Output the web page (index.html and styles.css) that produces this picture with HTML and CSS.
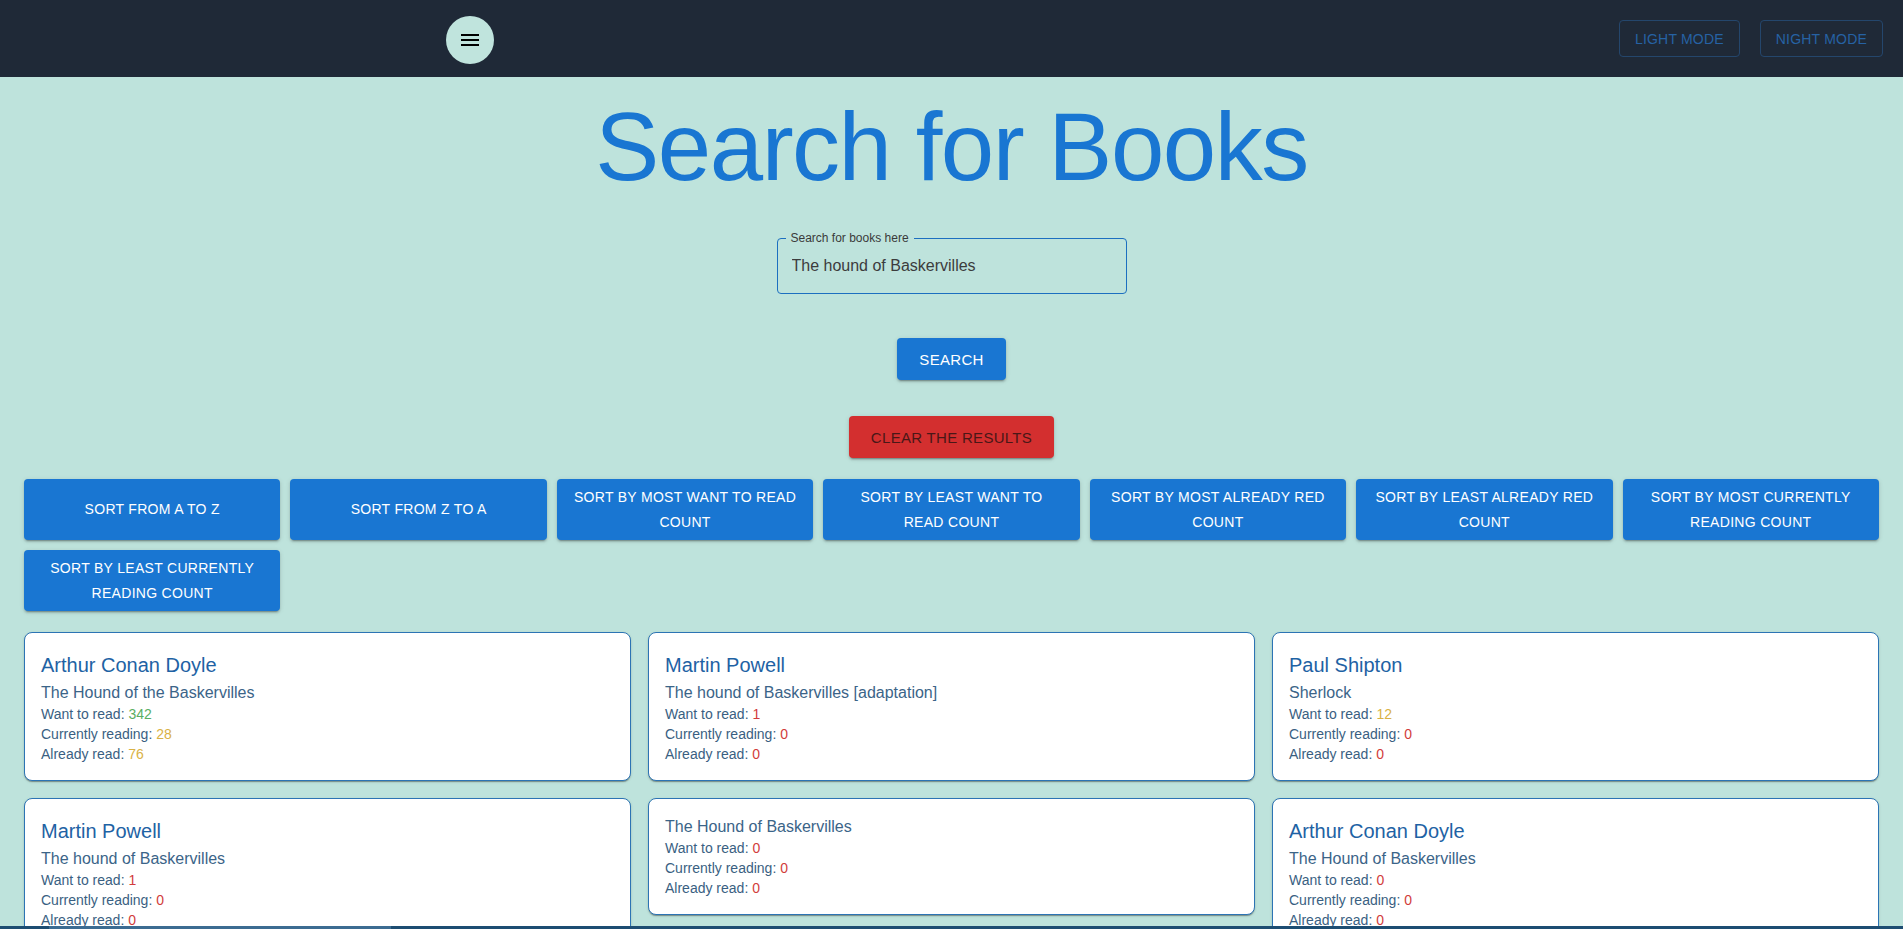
FILE: index.html
```html
<!DOCTYPE html>
<html lang="en">
<head>
<meta charset="utf-8">
<title>Search for Books</title>
<link rel="stylesheet" href="styles.css">
</head>
<body>
<header class="topbar">
  <button class="menu-btn" aria-label="menu">
    <svg viewBox="0 0 24 24" width="24" height="24"><path d="M3 18h18v-2H3v2zm0-5h18v-2H3v2zm0-7v2h18V6H3z" fill="#000"/></svg>
  </button>
  <div class="mode-group">
    <button class="mode-btn">Light mode</button>
    <button class="mode-btn">Night mode</button>
  </div>
</header>

<main class="page">
  <h1 class="title">Search for Books</h1>

  <div class="field">
    <span class="field-label">Search for books here</span>
    <div class="field-box">
      <input class="field-input" type="text" value="The hound of Baskervilles">
    </div>
  </div>

  <button class="btn btn-large btn-primary search-btn">Search</button>
  <button class="btn btn-large btn-danger clear-btn">Clear the results</button>

  <div class="sort-bar">
    <button class="btn btn-primary sort-btn">Sort from A to Z</button>
    <button class="btn btn-primary sort-btn">Sort from Z to A</button>
    <button class="btn btn-primary sort-btn">Sort by most want to read count</button>
    <button class="btn btn-primary sort-btn">Sort by least want to read count</button>
    <button class="btn btn-primary sort-btn">Sort by most already red count</button>
    <button class="btn btn-primary sort-btn">Sort by least already red count</button>
    <button class="btn btn-primary sort-btn">Sort by most currently reading count</button>
    <button class="btn btn-primary sort-btn">Sort by least currently reading count</button>
  </div>

  <section class="results">
    <article class="card">
      <div class="card-author">Arthur Conan Doyle</div>
      <div class="card-title">The Hound of the Baskervilles</div>
      <div class="card-stat">Want to read: <span class="num good">342</span></div>
      <div class="card-stat">Currently reading: <span class="num mid">28</span></div>
      <div class="card-stat">Already read: <span class="num mid">76</span></div>
    </article>
    <article class="card">
      <div class="card-author">Martin Powell</div>
      <div class="card-title">The hound of Baskervilles [adaptation]</div>
      <div class="card-stat">Want to read: <span class="num bad">1</span></div>
      <div class="card-stat">Currently reading: <span class="num bad">0</span></div>
      <div class="card-stat">Already read: <span class="num bad">0</span></div>
    </article>
    <article class="card">
      <div class="card-author">Paul Shipton</div>
      <div class="card-title">Sherlock</div>
      <div class="card-stat">Want to read: <span class="num mid">12</span></div>
      <div class="card-stat">Currently reading: <span class="num bad">0</span></div>
      <div class="card-stat">Already read: <span class="num bad">0</span></div>
    </article>
    <article class="card">
      <div class="card-author">Martin Powell</div>
      <div class="card-title">The hound of Baskervilles</div>
      <div class="card-stat">Want to read: <span class="num bad">1</span></div>
      <div class="card-stat">Currently reading: <span class="num bad">0</span></div>
      <div class="card-stat">Already read: <span class="num bad">0</span></div>
    </article>
    <article class="card">
      <div class="card-title">The Hound of Baskervilles</div>
      <div class="card-stat">Want to read: <span class="num bad">0</span></div>
      <div class="card-stat">Currently reading: <span class="num bad">0</span></div>
      <div class="card-stat">Already read: <span class="num bad">0</span></div>
    </article>
    <article class="card">
      <div class="card-author">Arthur Conan Doyle</div>
      <div class="card-title">The Hound of Baskervilles</div>
      <div class="card-stat">Want to read: <span class="num bad">0</span></div>
      <div class="card-stat">Currently reading: <span class="num bad">0</span></div>
      <div class="card-stat">Already read: <span class="num bad">0</span></div>
    </article>
  </section>
</main>

<div class="bottom-strip"><span class="bottom-thumb"></span></div>
</body>
</html>
```

FILE: styles.css
```css
* {
  box-sizing: border-box;
}

html, body {
  margin: 0;
  padding: 0;
}

body {
  background: #bee3dc;
  font-family: "Liberation Sans", Arial, sans-serif;
  color: #333;
}

button {
  font-family: inherit;
  cursor: pointer;
}

/* ---------- top bar ---------- */
.topbar {
  height: 77px;
  background: #1f2937;
  display: flex;
  align-items: center;
  justify-content: space-between;
  padding: 0 20px 0 446px;
}

.menu-btn {
  width: 48px;
  height: 48px;
  border-radius: 50%;
  border: none;
  background: #c0e4dd;
  display: flex;
  align-items: center;
  justify-content: center;
  padding: 0;
  margin-top: 2px;
}

.mode-group {
  display: flex;
  gap: 20px;
}

.mode-btn {
  height: 37px;
  padding: 0 15px;
  background: transparent;
  border: 1px solid #24466c;
  border-radius: 4px;
  color: #2662a4;
  font-size: 14px;
  letter-spacing: 0.2px;
  text-transform: uppercase;
}

/* ---------- page ---------- */
.page {
  display: flex;
  flex-direction: column;
  align-items: center;
}

.title {
  margin: 14px 0 0;
  font-size: 96px;
  line-height: 112px;
  font-weight: 400;
  letter-spacing: -1.5px;
  color: #1976d2;
}

.field {
  position: relative;
  margin-top: 35px;
  width: 350px;
}

.field-box {
  height: 56px;
  border: 1px solid #1c6fc0;
  border-radius: 4px;
  display: flex;
  align-items: center;
  padding: 0 14px;
}

.field-input {
  border: none;
  outline: none;
  background: transparent;
  font-family: inherit;
  font-size: 16px;
  color: #3c3c3c;
  width: 100%;
  padding: 0;
}

.field-label {
  position: absolute;
  top: -7px;
  left: 9px;
  padding: 0 5px;
  background: #bee3dc;
  font-size: 12px;
  line-height: 14px;
  color: #3a3a3a;
}

/* ---------- buttons ---------- */
.btn {
  border: none;
  border-radius: 4px;
  text-transform: uppercase;
  box-shadow: 0 3px 1px -2px rgba(0,0,0,.2), 0 2px 2px 0 rgba(0,0,0,.14), 0 1px 5px 0 rgba(0,0,0,.12);
}

.btn-large {
  height: 42px;
  padding: 0 22px;
  font-size: 15px;
  letter-spacing: 0.3px;
  white-space: nowrap;
}

.btn-primary {
  background: #1976d2;
  color: #fff;
}

.btn-danger {
  background: #d32f2f;
  color: #4a1717;
}

.search-btn {
  margin-top: 44px;
}

.clear-btn {
  margin-top: 36px;
}

.sort-bar {
  align-self: stretch;
  margin: 21px 24px 0;
  display: flex;
  flex-wrap: wrap;
  gap: 10px;
}

.sort-btn {
  width: calc((100% - 60px) / 7);
  min-height: 61px;
  padding: 6px 16px;
  font-size: 14px;
  line-height: 24.5px;
  letter-spacing: 0.3px;
}

/* ---------- results ---------- */
.results {
  align-self: stretch;
  margin: 21px 24px 0;
  display: grid;
  grid-template-columns: repeat(3, 1fr);
  column-gap: 17px;
  row-gap: 17px;
  align-items: start;
  padding-bottom: 20px;
}

.card {
  background: #fff;
  border: 1px solid #2c74b4;
  border-radius: 8px;
  padding: 16px;
  box-shadow: 0 2px 1px -1px rgba(0,0,0,.2), 0 1px 1px 0 rgba(0,0,0,.14), 0 1px 3px 0 rgba(0,0,0,.12);
}

.card-author {
  font-size: 20px;
  line-height: 32px;
  color: #1e62a4;
}

.card-title {
  font-size: 16px;
  line-height: 23px;
  color: #3b6488;
}

.card-stat {
  font-size: 14px;
  line-height: 20px;
  color: #3a5f82;
}

.num.good { color: #5aae62; }
.num.mid  { color: #d9b245; }
.num.bad  { color: #d23c3c; }

/* ---------- bottom strip ---------- */
.bottom-strip {
  position: fixed;
  left: 0;
  right: 0;
  bottom: 0;
  height: 3px;
  background: #1d4d72;
}

.bottom-thumb {
  position: absolute;
  left: 49px;
  width: 342px;
  top: 0;
  bottom: 0;
  background: #3c6c92;
}
```
